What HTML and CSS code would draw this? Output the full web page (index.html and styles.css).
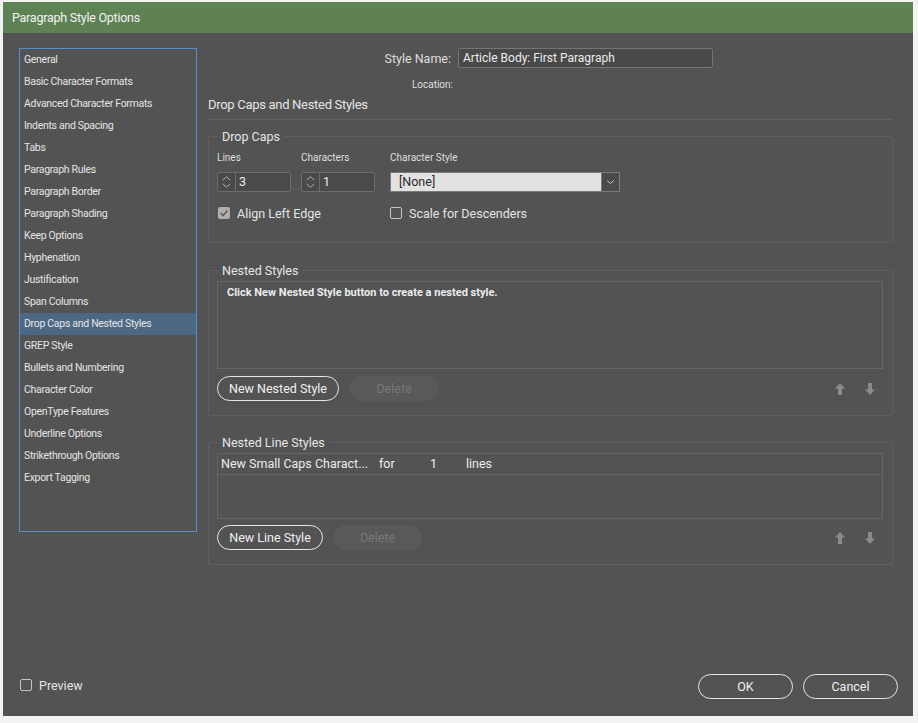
FILE: index.html
```html
<!DOCTYPE html>
<html lang="en">
<head>
    <meta charset="UTF-8">
    <title>Paragraph Style Options</title>
    <link rel="stylesheet" href="styles.css">
</head>
<body>
    <div class="dialog">
        <div class="titlebar">Paragraph Style Options</div>

        <div class="content">
            <ul class="sidebar">
                <li>General</li>
                <li>Basic Character Formats</li>
                <li>Advanced Character Formats</li>
                <li>Indents and Spacing</li>
                <li>Tabs</li>
                <li>Paragraph Rules</li>
                <li>Paragraph Border</li>
                <li>Paragraph Shading</li>
                <li>Keep Options</li>
                <li>Hyphenation</li>
                <li>Justification</li>
                <li>Span Columns</li>
                <li class="active">Drop Caps and Nested Styles</li>
                <li>GREP Style</li>
                <li>Bullets and Numbering</li>
                <li>Character Color</li>
                <li>OpenType Features</li>
                <li>Underline Options</li>
                <li>Strikethrough Options</li>
                <li>Export Tagging</li>
            </ul>

            <div class="panel">
                <div class="name-row">
                    <label>Style Name:</label>
                    <div class="text-input">Article Body: First Paragraph</div>
                </div>
                <div class="location-row">Location:</div>

                <h2 class="section-title">Drop Caps and Nested Styles</h2>

                <fieldset class="group">
                    <legend>Drop Caps</legend>
                    <div class="dc-grid">
                        <span class="field-label">Lines</span>
                        <span class="field-label">Characters</span>
                        <span class="field-label">Character Style</span>

                        <div class="spinner">
                            <div class="spin">
                                <svg width="18" height="18" viewBox="0 0 18 18"><path d="M5 7 L9 3.5 L13 7 M5 11 L9 14.5 L13 11" fill="none" stroke="#b5b5b5" stroke-width="1"/></svg>
                            </div>
                            <div class="spin-value">3</div>
                        </div>
                        <div class="spinner">
                            <div class="spin">
                                <svg width="18" height="18" viewBox="0 0 18 18"><path d="M5 7 L9 3.5 L13 7 M5 11 L9 14.5 L13 11" fill="none" stroke="#b5b5b5" stroke-width="1"/></svg>
                            </div>
                            <div class="spin-value">1</div>
                        </div>
                        <div class="dropdown">
                            <div class="dd-value">[None]</div>
                            <div class="dd-arrow">
                                <svg width="18" height="18" viewBox="0 0 18 18"><path d="M5.5 7.5 L9 10.5 L12.5 7.5" fill="none" stroke="#d0d0d0" stroke-width="1"/></svg>
                            </div>
                        </div>

                        <div class="check span2">
                            <span class="box checked">
                                <svg width="12" height="12" viewBox="0 0 12 12"><path d="M2.5 6 L5 8.5 L9.5 3.5" fill="none" stroke="#5d5d5d" stroke-width="1.6"/></svg>
                            </span>
                            Align Left Edge
                        </div>
                        <div class="check">
                            <span class="box"></span>
                            Scale for Descenders
                        </div>
                    </div>
                </fieldset>

                <fieldset class="group">
                    <legend>Nested Styles</legend>
                    <div class="list nested-list">
                        <p class="hint">Click New Nested Style button to create a nested style.</p>
                    </div>
                    <div class="button-row">
                        <button class="pill nested-new">New Nested Style</button>
                        <button class="pill disabled nested-del">Delete</button>
                        <div class="arrows">
                            <svg width="10" height="12" viewBox="0 0 10 12"><path d="M5 0 L10 5.5 L7 5.5 L7 12 L3 12 L3 5.5 L0 5.5 Z" fill="#8b8b8b"/></svg>
                            <svg width="10" height="12" viewBox="0 0 10 12"><path d="M5 12 L10 6.5 L7 6.5 L7 0 L3 0 L3 6.5 L0 6.5 Z" fill="#8b8b8b"/></svg>
                        </div>
                    </div>
                </fieldset>

                <fieldset class="group line-group">
                    <legend>Nested Line Styles</legend>
                    <div class="list line-list">
                        <div class="line-row">
                            <span>New Small Caps Charact...</span>
                            <span>for</span>
                            <span>1</span>
                            <span>lines</span>
                        </div>
                    </div>
                    <div class="button-row">
                        <button class="pill line-new">New Line Style</button>
                        <button class="pill disabled line-del">Delete</button>
                        <div class="arrows">
                            <svg width="10" height="12" viewBox="0 0 10 12"><path d="M5 0 L10 5.5 L7 5.5 L7 12 L3 12 L3 5.5 L0 5.5 Z" fill="#8b8b8b"/></svg>
                            <svg width="10" height="12" viewBox="0 0 10 12"><path d="M5 12 L10 6.5 L7 6.5 L7 0 L3 0 L3 6.5 L0 6.5 Z" fill="#8b8b8b"/></svg>
                        </div>
                    </div>
                </fieldset>
            </div>
        </div>

        <div class="footer">
            <div class="check preview">
                <span class="box"></span>
                Preview
            </div>
            <button class="pill ok">OK</button>
            <button class="pill cancel">Cancel</button>
        </div>
    </div>
</body>
</html>
```

FILE: styles.css
```css
* { box-sizing: border-box; }
body {
    margin: 0;
    background: linear-gradient(to bottom, #f3f3f3 716px, #a66b4f 716px);
    font-family: Roboto, "Liberation Sans", sans-serif;
    color: #dedede;
}
.dialog {
    width: 910px; height: 714px; margin: 2px 0 0 3px; background: #535353;
    display: flex; flex-direction: column;
}
.titlebar {
    height: 31px; line-height: 31px; padding-left: 9px; background: #5f8255;
    color: #f2f2f2; font-size: 12.5px; letter-spacing: -0.25px;
}
.content { display: flex; gap: 11px; padding: 15px 0 0 16px; }

/* left list */
.sidebar {
    list-style: none; margin: 0; padding: 0; width: 178px; height: 484px;
    border: 1px solid #5b8dc8;
}
.sidebar li { height: 22px; line-height: 22px; padding-left: 4px; font-size: 10.5px; letter-spacing: -0.3px; color: #e4e4e4; }
.sidebar li.active { background: #4c6884; }

/* right panel */
.panel { width: 685px; }
.name-row { display: flex; align-items: center; height: 20px; }
.name-row label { width: 250px; padding-right: 7px; padding-top: 1px; text-align: right; font-size: 12.5px; }
.text-input {
    width: 255px; height: 20px; line-height: 19px; padding-left: 4px;
    border: 1px solid #747474; border-radius: 2px; background: #494949;
    font-size: 12px; color: #ececec;
}
.location-row { width: 245px; margin-top: 10px; height: 14px; line-height: 14px; text-align: right; font-size: 10px; }
.section-title {
    margin: 4px 0 0; width: 684px; padding-bottom: 5px; border-bottom: 1px solid #636363;
    font-size: 13px; line-height: 18px; font-weight: normal; letter-spacing: -0.3px; color: #e4e4e4;
}

.group {
    margin: 19px 0 0; padding: 2px 8px 14px; min-width: 0;
    border: 1px solid #5f5f5f; border-radius: 2px;
}
.section-title + .group { margin-top: 8px; }
.group.line-group { margin-top: 18px; }
.group legend { margin-left: 1px; padding: 0 4px; font-size: 12.5px; line-height: 17px; color: #e6e6e6; }

/* drop caps */
.dc-grid { display: grid; grid-template-columns: 84px 89px 230px; padding: 4px 0 7px; }
.field-label { font-size: 10px; line-height: 14px; margin-bottom: 7px; }
.spinner {
    display: flex; width: 74px; height: 20px; border: 1px solid #6c6c6c; border-radius: 2px;
    background: #4a4a4a;
}
.spin { width: 18px; border-right: 1px solid #6c6c6c; display: flex; align-items: center; }
.spin-value { padding-left: 3px; font-size: 12.5px; line-height: 18px; color: #ececec; }
.dropdown { display: flex; width: 230px; height: 20px; border: 1px solid #7a7a7a; }
.dd-value { flex: 1; background: #e2e2e2; color: #2b2b2b; padding-left: 8px; font-size: 12.5px; line-height: 18px; }
.dd-arrow { width: 18px; background: #4b4b4b; border-left: 1px solid #7a7a7a; display: flex; align-items: center; }

.check { display: flex; align-items: center; gap: 7px; font-size: 12.5px; height: 16px; margin-top: 13px; color: #e4e4e4; }
.check.span2 { grid-column: span 2; margin-left: 1px; }
.box { width: 12px; height: 12px; border: 1px solid #c4c4c4; border-radius: 2px; display: inline-flex; }
.box.checked { border: none; background: #b0b0b0; }

/* lists */
.list { width: 666px; border: 1px solid #666; }
.nested-list { height: 88px; }
.hint { margin: 0; padding: 4px 9px; font-size: 11px; line-height: 14px; font-weight: bold; color: #ececec; }
.line-list { height: 66px; }
.line-row {
    display: grid; grid-template-columns: 158px 51px 36px auto; height: 21px; line-height: 20px;
    padding-left: 3px; border-bottom: 1px solid #666; font-size: 12.5px; color: #ececec;
}

.button-row { display: flex; align-items: center; margin-top: 7px; }
.line-group .button-row { margin-top: 6px; }
.pill {
    height: 25px; padding: 0; border: 1.5px solid #e6e6e6; border-radius: 13px; background: transparent;
    color: #f0f0f0; font-family: inherit; font-size: 12.5px;
}
.pill.disabled { border-color: transparent; background: #595959; color: #777; margin-left: 10px; }
.nested-new { width: 122px; }
.nested-del { width: 90px; }
.line-new { width: 106px; }
.line-del { width: 89px; }
.arrows { margin-left: auto; margin-right: 9px; display: flex; gap: 20px; }

/* footer */
.footer { margin-top: auto; display: flex; align-items: center; padding: 0 15px 17px 17px; }
.check.preview { margin: 0 0 3px; gap: 7px; }
.ok { width: 95px; margin-left: auto; }
.cancel { width: 95px; margin-left: 10px; }
```
